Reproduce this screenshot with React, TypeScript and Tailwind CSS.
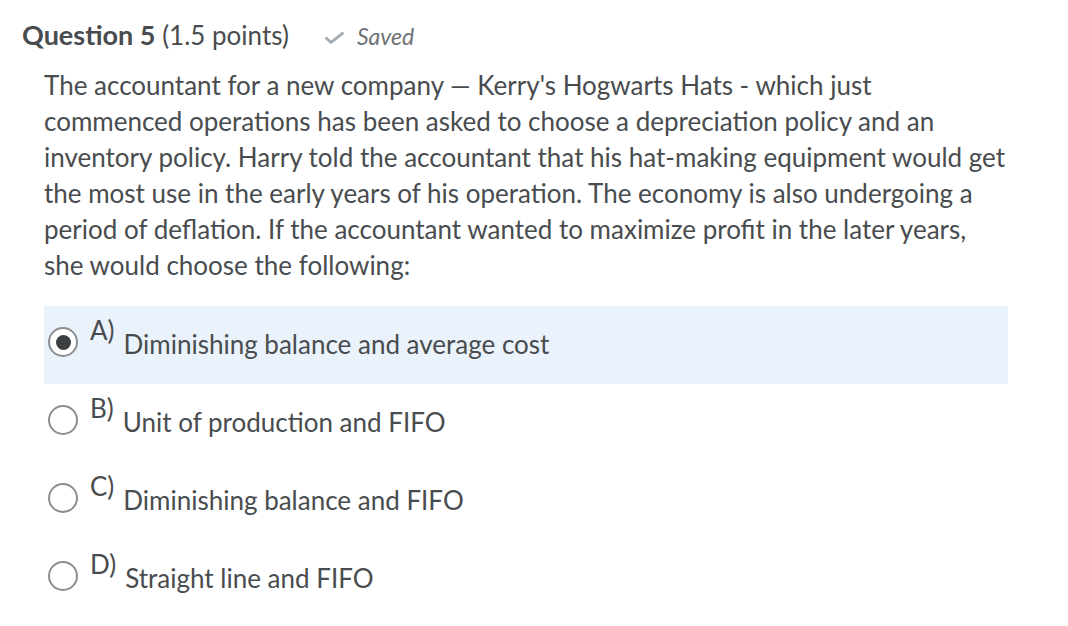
import React from "react";

const options = [
  { id: "A", label: "A)", text: "Diminishing balance and average cost", selected: true },
  { id: "B", label: "B)", text: "Unit of production and FIFO", selected: false },
  { id: "C", label: "C)", text: "Diminishing balance and FIFO", selected: false },
  { id: "D", label: "D)", text: "Straight line and FIFO", selected: false },
];

function Radio({ checked }: { checked: boolean }) {
  return (
    <span className="flex h-[30px] w-[30px] shrink-0 items-center justify-center rounded-full border-2 border-[#8a8f93] bg-white">
      {checked && <span className="h-[15px] w-[15px] rounded-full bg-[#3c3f41]" />}
    </span>
  );
}

export default function App() {
  return (
    <div className="h-[626px] w-full bg-white text-[#494c4e]" style={{ fontFamily: "Lato, 'Open Sans', sans-serif" }}>
      {/* header */}
      <div className="flex items-start pl-[22px] pt-[18px]">
        <h2 className="text-[26px] leading-[34px]">
          <span className="text-[27px] font-bold">Question 5</span> (1.5 points)
        </h2>
        <svg className="ml-[36px] mt-[14px]" width="19" height="12" viewBox="0 0 19 12" fill="none">
          <path d="M1.5 6.2 L6 10.4 L17.5 1.4" stroke="#a3aab0" strokeWidth="2.8" strokeLinecap="round" strokeLinejoin="round" />
        </svg>
        <span className="ml-[13px] mt-[4px] text-[23px] leading-[28px] italic text-[#6e7376]">Saved</span>
      </div>

      {/* question */}
      <p className="mt-[15px] ml-[44px] w-[962px] text-[26px] leading-[36px]">
        The accountant for a new company — Kerry's Hogwarts Hats - which just commenced operations has been asked to
        choose a depreciation policy and an inventory policy. Harry told the accountant that his hat-making equipment
        would get the most use in the early years of his operation. The economy is also undergoing a period of
        deflation. If the accountant wanted to maximize profit in the later years, she would choose the following:
      </p>

      {/* answers */}
      <div className="ml-[44px] mt-[23px] w-[964px]">
        {options.map((o) => (
          <div key={o.id} className={`flex h-[78px] items-start pl-[4px] ${o.selected ? "bg-[#eaf2fc]" : ""}`}>
            <span className="mt-[21px]">
              <Radio checked={o.selected} />
            </span>
            <span className="ml-[12px] mt-[10px] text-[26px] leading-[28px]">{o.label}</span>
            <span className="ml-[9px] mt-[24px] text-[26px] leading-[28px]">{o.text}</span>
          </div>
        ))}
      </div>
    </div>
  );
}
